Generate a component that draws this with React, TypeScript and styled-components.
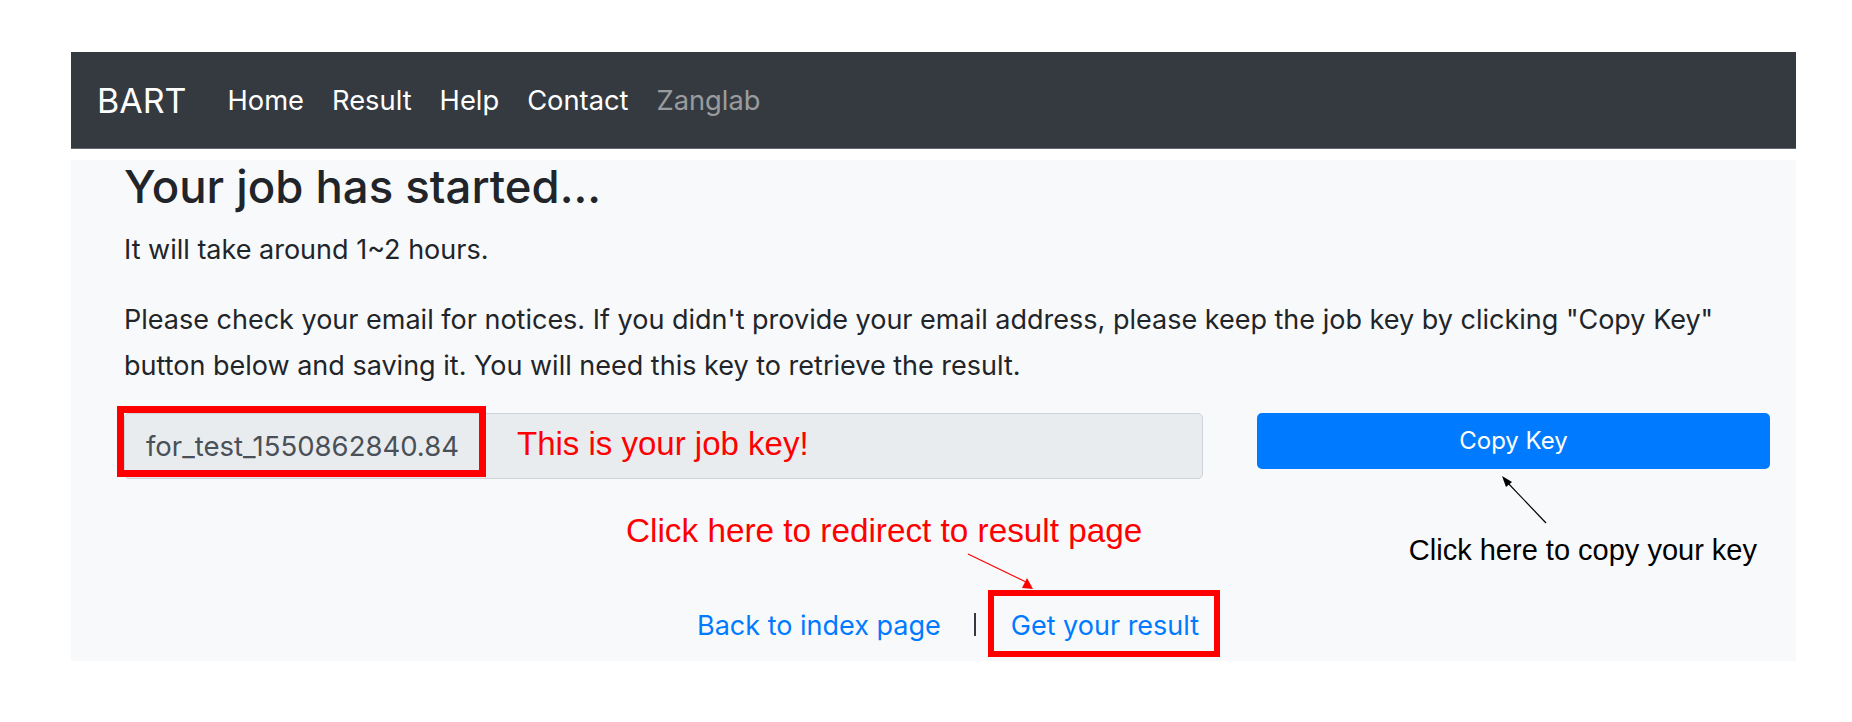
import styled, { createGlobalStyle } from 'styled-components';

const GlobalStyle = createGlobalStyle`
  body {
    margin: 0;
    background: #fff;
    font-family: Inter, "Noto Sans", sans-serif;
    color: #212529;
  }
`;

const Page = styled.div`
  padding: 52px 0 0 71px;
  width: 1725px;
`;

const Navbar = styled.nav`
  display: flex;
  align-items: center;
  height: 97px;
  padding: 0 26px;
  background: #343a40;
  border-bottom: 1px solid #62676d;
  box-sizing: border-box;
`;

const Brand = styled.span`
  font-size: 34px;
  color: #fff;
  margin-right: 27px;
`;

const NavLink = styled.a<{ $muted?: boolean }>`
  font-size: 27.3px;
  padding: 0 14px;
  color: ${(p) => (p.$muted ? 'rgba(255, 255, 255, 0.5)' : '#fff')};
  text-decoration: none;
`;

const Panel = styled.main`
  background: #f8f9fa;
  padding: 0 26px 4px 53px;
`;

const Title = styled.h3`
  font-size: 45.5px;
  font-weight: 500;
  line-height: 1.2;
  margin: 11px 0 12px;
`;

const Text = styled.p`
  font-size: 27px;
  line-height: 46px;
  margin: 0 0 24px;
  white-space: nowrap;
`;

const KeyGrid = styled.div`
  display: grid;
  grid-template-columns: 1079px 513px;
  column-gap: 54px;
  align-items: start;
`;

const LeftCol = styled.div`
  display: flex;
  flex-direction: column;
`;

const RightCol = styled.div`
  display: flex;
  flex-direction: column;
`;

const KeyField = styled.div`
  display: flex;
  align-items: flex-start;
  height: 66px;
  box-sizing: border-box;
  background: #e9ecef;
  border: 1px solid #ced4da;
  border-radius: 5px;
`;

const KeyValue = styled.span`
  box-sizing: border-box;
  width: 369px;
  height: 71px;
  margin: -8px 0 0 -8px;
  border: 7px solid #ff0000;
  padding: 16px 0 0 22px;
  font-size: 27.5px;
  color: #495057;
  white-space: nowrap;
`;

const Note = styled.span<{ $color?: string; $size?: number }>`
  font-family: "Liberation Sans", Arial, sans-serif;
  font-size: ${(p) => p.$size ?? 33}px;
  color: ${(p) => p.$color ?? '#ff0000'};
  white-space: nowrap;
`;

const KeyNote = styled(Note)`
  margin: 11px 0 0 31px;
`;

const RedirectNote = styled(Note)`
  font-size: 33.3px;
  margin: 33px 0 0 502px;
`;

const CopyButton = styled.button`
  height: 56px;
  border: none;
  border-radius: 5px;
  background: #007bff;
  color: #fff;
  font-family: Inter, "Noto Sans", sans-serif;
  font-size: 24px;
`;

const CopyNote = styled(Note)`
  align-self: flex-end;
  margin: 6px 13px 0 0;
`;

const ArrowSvg = styled.svg<{ $left: number; $top?: number }>`
  display: block;
  margin-left: ${(p) => p.$left}px;
  margin-top: ${(p) => p.$top ?? 0}px;
`;

const LinkRow = styled.div`
  display: flex;
  align-items: center;
  height: 67px;
  padding-left: 573px;
`;

const Link = styled.a`
  font-size: 27px;
  color: #007bff;
  text-decoration: none;
  white-space: nowrap;
  padding-top: 5px;
`;

const Divider = styled.span`
  width: 2px;
  height: 23px;
  margin: 3px 12px 0 33px;
  background: #343a40;
`;

const ResultBox = styled.div`
  box-sizing: border-box;
  height: 67px;
  display: flex;
  align-items: center;
  border: 6px solid #ff0000;
  padding: 0 15px 0 17px;
`;

export default function App() {
  return (
    <Page>
      <GlobalStyle />
      <Navbar>
        <Brand>BART</Brand>
        <NavLink>Home</NavLink>
        <NavLink>Result</NavLink>
        <NavLink>Help</NavLink>
        <NavLink>Contact</NavLink>
        <NavLink $muted>Zanglab</NavLink>
      </Navbar>
      <Panel>
        <Title>Your job has started...</Title>
        <Text>It will take around 1~2 hours.</Text>
        <Text>
          Please check your email for notices. If you didn't provide your email address, please keep the job key by clicking "Copy Key"
          <br />
          button below and saving it. You will need this key to retrieve the result.
        </Text>
        <KeyGrid>
          <LeftCol>
            <KeyField>
              <KeyValue>for_test_1550862840.84</KeyValue>
              <KeyNote>This is your job key!</KeyNote>
            </KeyField>
            <RedirectNote>Click here to redirect to result page</RedirectNote>
            <ArrowSvg $left={836} width="80" height="40" viewBox="0 0 80 40">
              <line x1="8" y1="4" x2="68" y2="33" stroke="#ff0000" strokeWidth="1.2" />
              <polygon points="73,39 62,38 67,28" fill="#ff0000" />
            </ArrowSvg>
          </LeftCol>
          <RightCol>
            <CopyButton>Copy Key</CopyButton>
            <ArrowSvg $left={240} $top={4} width="60" height="55" viewBox="0 0 60 55">
              <line x1="49" y1="50" x2="9" y2="8" stroke="#000" strokeWidth="1.2" />
              <polygon points="5,3 15,9 9,14" fill="#000" />
            </ArrowSvg>
            <CopyNote $color="#000" $size={29}>Click here to copy your key</CopyNote>
          </RightCol>
        </KeyGrid>
        <LinkRow>
          <Link>Back to index page</Link>
          <Divider />
          <ResultBox>
            <Link>Get your result</Link>
          </ResultBox>
        </LinkRow>
      </Panel>
    </Page>
  );
}
